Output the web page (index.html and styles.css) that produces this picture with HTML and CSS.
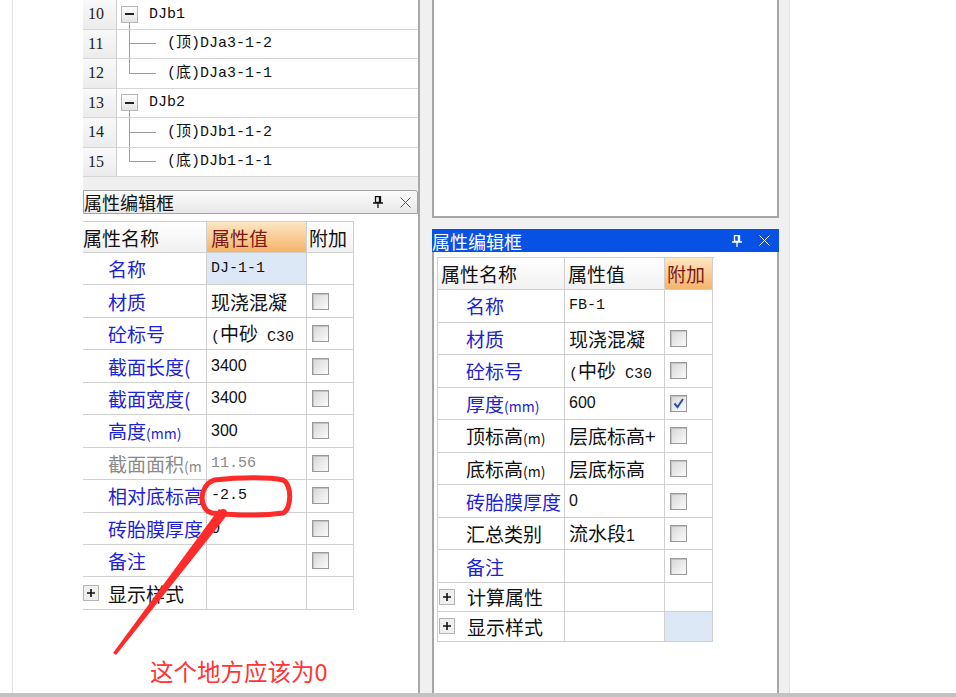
FILE: index.html
```html
<!DOCTYPE html>
<html lang="zh-CN">
<head>
<meta charset="UTF-8">
<meta name="viewport" content="width=device-width, initial-scale=1.0">
<title>属性编辑框</title>
<link rel="stylesheet" href="styles.css">
</head>
<body>

<div class="screen">
  <div class="margin"><div class="rule"></div></div>

  <!-- left pane: component tree + property editor -->
  <div class="left-pane">
    <div class="tree">
      <div class="trow"><span class="num">10</span>
        <div class="tcell"><span class="node"><span class="node-top"></span><span class="box"><i></i></span><span class="node-bot"></span></span><span class="label">DJb1</span></div>
      </div>
      <div class="trow"><span class="num">11</span>
        <div class="tcell"><span class="branch"><span class="up"></span><span class="down"></span></span><span class="label">(顶)DJa3-1-2</span></div>
      </div>
      <div class="trow"><span class="num">12</span>
        <div class="tcell"><span class="branch last"><span class="up"></span><span class="down"></span></span><span class="label">(底)DJa3-1-1</span></div>
      </div>
      <div class="trow"><span class="num">13</span>
        <div class="tcell"><span class="node"><span class="node-top"></span><span class="box"><i></i></span><span class="node-bot"></span></span><span class="label">DJb2</span></div>
      </div>
      <div class="trow"><span class="num">14</span>
        <div class="tcell"><span class="branch"><span class="up"></span><span class="down"></span></span><span class="label">(顶)DJb1-1-2</span></div>
      </div>
      <div class="trow"><span class="num">15</span>
        <div class="tcell"><span class="branch last"><span class="up"></span><span class="down"></span></span><span class="label">(底)DJb1-1-1</span></div>
      </div>
    </div>

    <div class="split"></div>

    <div class="titlebar">
      <span class="title">属性编辑框</span>
      <svg class="pin" width="10" height="12" viewBox="0 0 10 12"><path d="M2.5 0.5h5v6h-5z M6.5 0.5v6 M0 7h10 M5 7v5" fill="none" stroke="#111" stroke-width="1.3"/></svg>
      <svg class="close" width="11" height="11" viewBox="0 0 11 11"><path d="M0.5 0.5l10 10 M10.5 0.5l-10 10" stroke="#555" stroke-width="1"/></svg>
    </div>

    <div class="panel-body">
      <div class="props left-props">
        <div class="c hd first">属性名称</div>
        <div class="c hd hot">属性值</div>
        <div class="c hd add-hd">附加</div>

        <div class="c name">名称</div>
        <div class="c val sel"><span class="m">DJ-1-1</span></div>
        <div class="c add"></div>

        <div class="c name">材质</div>
        <div class="c val">现浇混凝</div>
        <div class="c add"><span class="chk"></span></div>

        <div class="c name">砼标号</div>
        <div class="c val"><span><span class="m">(</span>中砂<span class="m"> C30</span></span></div>
        <div class="c add"><span class="chk"></span></div>

        <div class="c name">截面长度(</div>
        <div class="c val"><span class="s">3400</span></div>
        <div class="c add"><span class="chk"></span></div>

        <div class="c name">截面宽度(</div>
        <div class="c val"><span class="s">3400</span></div>
        <div class="c add"><span class="chk"></span></div>

        <div class="c name"><span>高度<span class="unit">(mm)</span></span></div>
        <div class="c val"><span class="s">300</span></div>
        <div class="c add"><span class="chk"></span></div>

        <div class="c name dim"><span>截面面积<span class="unit">(m</span></span></div>
        <div class="c val dim"><span class="m">11.56</span></div>
        <div class="c add"><span class="chk"></span></div>

        <div class="c name">相对底标高</div>
        <div class="c val"><span class="m">-2.5</span></div>
        <div class="c add"><span class="chk"></span></div>

        <div class="c name">砖胎膜厚度</div>
        <div class="c val"><span class="s">0</span></div>
        <div class="c add"><span class="chk"></span></div>

        <div class="c name">备注</div>
        <div class="c val"></div>
        <div class="c add"><span class="chk"></span></div>

        <div class="c name group"><svg class="plus" width="16" height="16" viewBox="0 0 16 16"><rect x="0.5" y="0.5" width="15" height="15" fill="#efefef" stroke="#b5b5b5"/><path d="M4 8h8M8 4v8" stroke="#111" stroke-width="1.6"/></svg>显示样式</div>
        <div class="c val"></div>
        <div class="c add"></div>
      </div>

      <p class="note">这个地方应该为0</p>
    </div>
  </div>

  <div class="gutter"></div>

  <!-- right pane: blank view + active property editor -->
  <div class="right-pane">
    <div class="blank"></div>
    <div class="split narrow"></div>

    <div class="titlebar active">
      <span class="title">属性编辑框</span>
      <svg class="pin" width="10" height="12" viewBox="0 0 10 12"><path d="M2.5 0.5h5v6h-5z M6.5 0.5v6 M0 7h10 M5 7v5" fill="none" stroke="#fff" stroke-width="1.3"/></svg>
      <svg class="close" width="11" height="11" viewBox="0 0 11 11"><path d="M0.5 0.5l10 10 M10.5 0.5l-10 10" stroke="#fff" stroke-width="1"/></svg>
    </div>

    <div class="panel-body framed">
      <div class="props right-props">
        <div class="c hd">属性名称</div>
        <div class="c hd">属性值</div>
        <div class="c hd hot add-hd">附加</div>

        <div class="c name">名称</div>
        <div class="c val"><span class="m">FB-1</span></div>
        <div class="c add"></div>

        <div class="c name">材质</div>
        <div class="c val">现浇混凝</div>
        <div class="c add"><span class="chk"></span></div>

        <div class="c name">砼标号</div>
        <div class="c val"><span><span class="m">(</span>中砂<span class="m"> C30</span></span></div>
        <div class="c add"><span class="chk"></span></div>

        <div class="c name"><span>厚度<span class="unit">(mm)</span></span></div>
        <div class="c val"><span class="s">600</span></div>
        <div class="c add"><span class="chk"><svg width="15" height="15" viewBox="0 0 15 15"><path d="M3.5 7.5l3 3.5 5.5-8" fill="none" stroke="#2f4fa6" stroke-width="2"/></svg></span></div>

        <div class="c name plain"><span>顶标高<span class="unit">(m)</span></span></div>
        <div class="c val">层底标高+</div>
        <div class="c add"><span class="chk"></span></div>

        <div class="c name plain"><span>底标高<span class="unit">(m)</span></span></div>
        <div class="c val">层底标高</div>
        <div class="c add"><span class="chk"></span></div>

        <div class="c name">砖胎膜厚度</div>
        <div class="c val"><span class="s">0</span></div>
        <div class="c add"><span class="chk"></span></div>

        <div class="c name plain">汇总类别</div>
        <div class="c val"><span>流水段<span class="s">1</span></span></div>
        <div class="c add"><span class="chk"></span></div>

        <div class="c name">备注</div>
        <div class="c val"></div>
        <div class="c add"><span class="chk"></span></div>

        <div class="c name group"><svg class="plus" width="16" height="16" viewBox="0 0 16 16"><rect x="0.5" y="0.5" width="15" height="15" fill="#efefef" stroke="#b5b5b5"/><path d="M4 8h8M8 4v8" stroke="#111" stroke-width="1.6"/></svg>计算属性</div>
        <div class="c val"></div>
        <div class="c add"></div>

        <div class="c name group"><svg class="plus" width="16" height="16" viewBox="0 0 16 16"><rect x="0.5" y="0.5" width="15" height="15" fill="#efefef" stroke="#b5b5b5"/><path d="M4 8h8M8 4v8" stroke="#111" stroke-width="1.6"/></svg>显示样式</div>
        <div class="c val"></div>
        <div class="c add sel"></div>
      </div>
    </div>
  </div>

  <div class="gutter thin"></div>
  <div class="empty"></div>

  <div class="statusbar"></div>
</div>

<!-- red hand-drawn markup over the left editor -->
<svg class="markup" width="956" height="697" viewBox="0 0 956 697">
  <path d="M214 480 C240 477 270 477 283 480 C292 484 292 509 283 513 C262 516 232 515 212 513 C199 510 198 486 214 480 Z" fill="none" stroke="#ff2b2b" stroke-width="5"/>
  <polygon points="219,509 228,514 116,655 113,653" fill="#ff2b2b"/>
  <circle cx="223" cy="513" r="4" fill="#ff2b2b"/>
</svg>

</body>
</html>
```

FILE: styles.css
```css
body {
    margin: 0;
    width: 956px;
    height: 697px;
    overflow: hidden;
    position: relative;
    background: #fff;
    color: #111;
    font-family: "Noto Sans CJK SC", sans-serif;
    font-size: 19px;
    line-height: 1;
}

.screen {
    display: grid;
    grid-template-columns: 83px 337px 12px 347px 11px 1fr;
    grid-template-rows: 693px 4px;
    height: 697px;
}

.rule {
    margin-left: 12px;
    height: 100%;
    border-left: 1px solid #e4e4e4;
}

/* panes */
.left-pane, .right-pane {
    display: flex;
    flex-direction: column;
    min-height: 0;
    background: #f0f0f0;
}
.left-pane {
    border-right: 2px solid #a9a9a9;
}
.gutter {
    background: #f0f0f0;
}
.gutter.thin {
    border-right: 1px solid #e2e2e2;
}
.statusbar {
    grid-column: 1 / -1;
    background: #c2c2c2;
}

/* tree */
.tree {
    background: #fff;
}
.trow {
    display: flex;
    height: 29.5px;
    box-sizing: border-box;
    border-bottom: 1px solid #d6d6d6;
}
.num {
    width: 34px;
    box-sizing: border-box;
    padding-left: 5px;
    display: flex;
    align-items: center;
    border-right: 1px solid #cfcfcf;
    background: linear-gradient(#f9f9f9, #ececec);
    font-family: "Liberation Serif", serif;
    font-size: 16px;
    color: #222;
}
.tcell {
    flex: 1;
    display: flex;
}
.node {
    display: flex;
    flex-direction: column;
    align-items: center;
    width: 17px;
    margin-left: 4px;
}
.node-top, .node-bot {
    flex: 1;
}
.node-bot {
    border-left: 1px solid #9c9c9c;
}
.box {
    width: 17px;
    height: 17px;
    box-sizing: border-box;
    border: 1px solid #b6b6b6;
    background: linear-gradient(#fdfdfd, #e4e4e4);
    display: flex;
    align-items: center;
    justify-content: center;
}
.box i {
    width: 9px;
    height: 2px;
    background: #222;
}
.branch {
    display: flex;
    flex-direction: column;
    width: 27px;
    margin-left: 12px;
}
.branch .up {
    flex: 1;
    border-left: 1px solid #9c9c9c;
    border-bottom: 1px solid #9c9c9c;
}
.branch .down {
    flex: 1;
    border-left: 1px solid #9c9c9c;
}
.branch.last .down {
    border-left: none;
}
.label {
    align-self: center;
    margin-left: 11px;
    font-family: "Liberation Mono", "Noto Sans CJK SC", monospace;
    font-size: 15px;
}

/* title bars */
.split {
    height: 13px;
}
.split.narrow {
    height: 11px;
}
.titlebar {
    height: 24px;
    box-sizing: border-box;
    display: flex;
    align-items: center;
    padding-right: 6px;
    overflow: hidden;
    border: 1px solid #a3a3a3;
    border-radius: 0 3px 0 0;
    background: linear-gradient(#fbfbfb, #e8e8e8);
}
.titlebar .title {
    flex: 1;
    white-space: nowrap;
    font-size: 18px;
}
.titlebar .pin {
    margin-right: 17px;
}
.titlebar.active {
    height: 23px;
    padding-right: 9px;
    border: none;
    border-radius: 0;
    background: #0752e4;
    color: #fff;
}

/* editor bodies */
.panel-body {
    flex: 1;
    background: #fff;
}
.panel-body.framed {
    border-left: 2px solid #a6a6a6;
    border-right: 2px solid #a6a6a6;
}
.blank {
    height: 218px;
    box-sizing: border-box;
    background: #fff;
    border: 2px solid #a6a6a6;
    border-top: none;
}

/* property grid */
.props {
    display: grid;
    border-top: 1px solid #d0d0d0;
}
.left-props {
    margin-top: 7px;
    width: 271px;
    grid-template-columns: 124px 100px 47px;
    grid-template-rows: 31px repeat(11, 32.45px);
}
.right-props {
    margin: 5px 0 0 3px;
    width: 276px;
    border-left: 1px solid #d0d0d0;
    grid-template-columns: 127px 100px 48px;
    grid-template-rows: 32px repeat(9, 32.55px) 29px 30px;
}
.c {
    display: flex;
    align-items: center;
    box-sizing: border-box;
    overflow: hidden;
    white-space: pre;
    border-right: 1px solid #d0d0d0;
    border-bottom: 1px solid #d0d0d0;
}
.hd {
    padding-left: 3px;
    background: linear-gradient(#ffffff, #f1f1f1);
}
.hd.first {
    padding-left: 0;
}
.hd.hot {
    background: linear-gradient(#fde6c2, #f5b46a);
    color: #7d1818;
}
.left-props .hd.hot {
    padding-left: 4px;
}
.hd.add-hd {
    padding-left: 2px;
}
.name {
    padding-left: 25px;
    color: #1d22d4;
}
.right-props .name {
    padding-left: 28px;
}
.name.plain {
    color: #111;
}
.name.dim, .val.dim {
    color: #8a8a8a;
}
.name.group {
    padding-left: 0;
    color: #111;
}
.right-props .name.group {
    padding-left: 1px;
}
.plus {
    margin-right: 9px;
}
.right-props .plus {
    margin-right: 12px;
}
.unit {
    font-size: 14px;
}
.val {
    padding-left: 4px;
}
.sel {
    background: #dde8f6;
}
.m {
    font-family: "Liberation Mono", monospace;
    font-size: 15px;
}
.s {
    font-family: "Liberation Sans", sans-serif;
    font-size: 16px;
}
.add {
    padding-left: 5px;
}
.chk {
    width: 17px;
    height: 17px;
    box-sizing: border-box;
    display: flex;
    align-items: center;
    justify-content: center;
    border: 1px solid #9a9a9a;
    background: linear-gradient(135deg, #d6d6d6, #fbfbfb);
    box-shadow: inset 1px 1px 0 #c2c2c2;
}

/* annotation */
.note {
    margin: 48px 0 0 67px;
    color: #ff3434;
    font-size: 23.5px;
    line-height: 26px;
}
.markup {
    position: absolute;
    left: 0;
    top: 0;
    pointer-events: none;
}
```
